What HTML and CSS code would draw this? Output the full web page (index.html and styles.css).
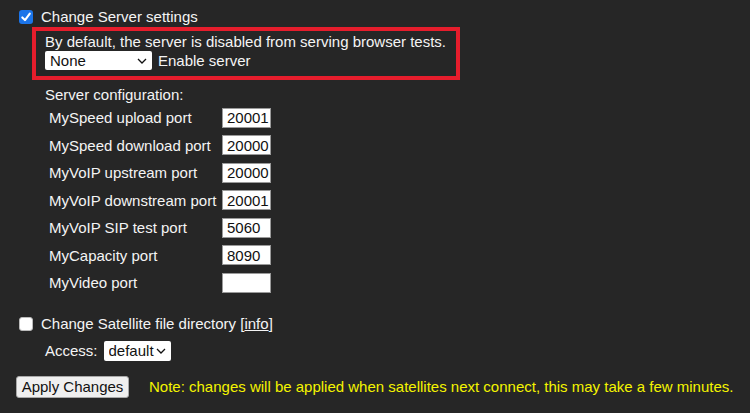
FILE: index.html
```html
<!DOCTYPE html>
<html>
<head>
<meta charset="utf-8">
<link rel="stylesheet" href="styles.css">
</head>
<body>
<form class="page">
  <div class="check-row first">
    <span class="cb checked"><svg viewBox="0 0 14 14" width="14" height="14"><path d="M3.3 7.4 L6 10.1 L10.8 3.6" fill="none" stroke="#fff" stroke-width="2.1" stroke-linecap="round" stroke-linejoin="round"/></svg></span>
    <span class="check-label">Change Server settings</span>
  </div>
  <div class="notice">
    <div class="notice-text">By default, the server is disabled from serving browser tests.</div>
    <div class="notice-row">
      <span class="sel sel-none"><select><option>None</option></select><svg class="chev" viewBox="0 0 10 6" width="10" height="6"><path d="M1 1 L5 5 L9 1" fill="none" stroke="#111" stroke-width="1.3"/></svg></span>
      <span class="enable">Enable server</span>
    </div>
  </div>
  <div class="config-title">Server configuration:</div>
  <div class="ports">
    <span class="plabel">MySpeed upload port</span><input class="pinput" value="20001">
    <span class="plabel">MySpeed download port</span><input class="pinput" value="20000">
    <span class="plabel">MyVoIP upstream port</span><input class="pinput" value="20000">
    <span class="plabel">MyVoIP downstream port</span><input class="pinput" value="20001">
    <span class="plabel">MyVoIP SIP test port</span><input class="pinput" value="5060">
    <span class="plabel">MyCapacity port</span><input class="pinput" value="8090">
    <span class="plabel">MyVideo port</span><input class="pinput" value="">
  </div>
  <div class="check-row second">
    <span class="cb"></span>
    <span class="check-label">Change Satellite file directory [<a class="info" href="#">info</a>]</span>
  </div>
  <div class="access-row">
    <span class="access">Access:</span>
    <span class="sel sel-default"><select><option>default</option></select><svg class="chev" viewBox="0 0 10 6" width="10" height="6"><path d="M1 1 L5 5 L9 1" fill="none" stroke="#111" stroke-width="1.3"/></svg></span>
  </div>
  <div class="apply-row">
    <button type="button" class="apply">Apply Changes</button>
    <span class="note">Note: changes will be applied when satellites next connect, this may take a few minutes.</span>
  </div>
</form>
</body>
</html>
```

FILE: styles.css
```css
html, body {
  background: #262626;
}
body {
  margin: 0;
  color: #f4f4f4;
  font-family: "Liberation Sans", Arial, Helvetica, sans-serif;
  font-size: 15px;
}
.page {
  padding: 8px 0 0 16px;
  display: flex;
  flex-direction: column;
  align-items: flex-start;
}
.check-row {
  display: flex;
  align-items: center;
  height: 17px;
}
.check-row.first {
  margin-bottom: 2px;
}
.cb {
  width: 14px;
  height: 14px;
  box-sizing: border-box;
  margin-left: 3px;
  margin-right: 8px;
  border-radius: 3px;
  background: #fff;
  border: 1px solid #bbb;
  display: flex;
}
.cb.checked {
  background: #1b74e9;
  border: none;
}
.check-label {
  line-height: 17px;
}
.info {
  color: #f4f4f4;
  text-decoration: underline;
}
.notice {
  margin-left: 16px;
  width: 428px;
  height: 53px;
  box-sizing: border-box;
  border: 4px solid #e61d2c;
  padding: 2px 9px 0;
}
.notice-text {
  line-height: 18px;
}
.notice-row {
  display: flex;
  align-items: center;
  height: 19px;
}
.sel {
  position: relative;
  display: inline-flex;
}
.sel select {
  appearance: none;
  -webkit-appearance: none;
  background: #fff;
  color: #111;
  border: none;
  border-radius: 2px;
  font-family: inherit;
  font-size: 15px;
  margin: 0;
  outline: none;
}
.sel .chev {
  position: absolute;
  top: 50%;
  margin-top: -3px;
}
.sel-none select {
  width: 107px;
  height: 19px;
  padding: 0 0 0 5px;
}
.sel-none .chev {
  right: 5px;
}
.enable {
  margin-left: 6px;
}
.config-title {
  margin-left: 29px;
  margin-top: 6px;
  line-height: 17px;
}
.ports {
  margin-left: 33px;
  margin-top: 1px;
  display: grid;
  grid-template-columns: 169px 49px;
  column-gap: 4px;
  grid-auto-rows: 27.5px;
  align-items: center;
}
.pinput {
  width: 49px;
  height: 20px;
  box-sizing: border-box;
  border: 1px solid #9a9a9a;
  background: #fff;
  color: #111;
  font-family: inherit;
  font-size: 15px;
  padding: 0 0 0 4px;
  margin: 0;
  outline: none;
}
.check-row.second {
  margin-top: 17px;
  height: 20px;
}
.access-row {
  margin-top: 7px;
  margin-left: 29px;
  display: flex;
  align-items: center;
  height: 20px;
}
.access {
  margin-right: 6px;
}
.sel-default select {
  width: 67px;
  height: 20px;
  padding: 0 0 0 5px;
}
.sel-default .chev {
  right: 5px;
}
.apply-row {
  margin-top: 15px;
  display: flex;
  align-items: center;
}
.apply {
  width: 113px;
  height: 22px;
  margin: 0;
  padding: 0;
  font-family: inherit;
  font-size: 15px;
  color: #111;
  background: #efefef;
  border: 1px solid #a8a8a8;
  border-radius: 3px;
}
.note {
  margin-left: 20px;
  color: #f4f400;
}
```
